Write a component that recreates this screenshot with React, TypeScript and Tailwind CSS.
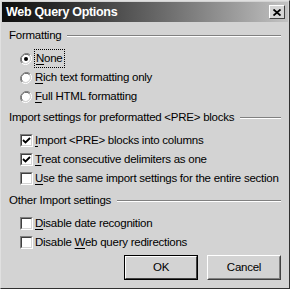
import React from "react";

const U = ({ c }: { c: string }) => <span className="underline underline-offset-[2px]">{c}</span>;

function Radio({ checked }: { checked?: boolean }) {
  return (
    <svg width="12" height="12" viewBox="0 0 12 12" className="shrink-0">
      <path d="M10.2 1.8 A6 6 0 0 0 1.8 10.2" stroke="#808080" strokeWidth="1" fill="none" />
      <path d="M9.5 2.5 A5 5 0 0 0 2.5 9.5" stroke="#404040" strokeWidth="1" fill="none" />
      <circle cx="6" cy="6" r="4.3" fill="#ffffff" />
      <path d="M1.8 10.2 A6 6 0 0 0 10.2 1.8" stroke="#ffffff" strokeWidth="1" fill="none" />
      <path d="M2.5 9.5 A5 5 0 0 0 9.5 2.5" stroke="#d4d4d4" strokeWidth="1" fill="none" />
      {checked && <circle cx="6" cy="6" r="2" fill="#000" />}
    </svg>
  );
}

function Check({ checked }: { checked?: boolean }) {
  return (
    <div className="w-[13px] h-[13px] shrink-0 border border-t-[#808080] border-l-[#808080] border-r-white border-b-white">
      <div className="w-full h-full border border-t-[#404040] border-l-[#404040] border-r-[#d4d4d4] border-b-[#d4d4d4] bg-white">
        {checked && (
          <svg width="9" height="9" viewBox="0 0 9 9" className="block">
            <path d="M1 4 L3.5 6.5 L8 2" stroke="#000" strokeWidth="1.8" fill="none" />
          </svg>
        )}
      </div>
    </div>
  );
}

function Header({ children }: { children: React.ReactNode }) {
  return (
    <div className="h-[18px] flex items-center gap-[6px]">
      <span className="whitespace-nowrap">{children}</span>
      <div className="flex-1 flex flex-col">
        <div className="h-px bg-[#808080]" />
        <div className="h-px bg-white" />
      </div>
    </div>
  );
}

function Row({ children }: { children: React.ReactNode }) {
  return <div className="h-[19px] flex items-center gap-[2px] pl-[11px] whitespace-nowrap">{children}</div>;
}

export default function App() {
  return (
    <div
      className="w-[290px] h-[289px] bg-[#d3d3d3] text-[11.5px] tracking-[-0.25px] text-black flex flex-col border-t border-l border-t-[#e0e0e0] border-l-[#e0e0e0] border-r border-b border-r-[#303030] border-b-[#303030]"
      style={{ fontFamily: '"Liberation Sans", Arial, sans-serif' }}
    >
      <div className="h-[20px] flex items-center justify-between pl-[4px] pr-[3px] bg-gradient-to-r from-[#0e0e0e] via-[#5f5f5f] to-[#c2c2c2] mt-[1px] mx-[1px]">
        <span className="text-white font-bold text-[12.5px] tracking-[-0.3px]">Web Query Options</span>
        <div className="w-[16px] h-[14px] bg-[#d4d4d4] border border-t-white border-l-white border-r-[#404040] border-b-[#404040] flex items-center justify-center">
          <svg width="8" height="7" viewBox="0 0 8 7">
            <path d="M0.5 0.5 L7.5 6.5 M7.5 0.5 L0.5 6.5" stroke="#000" strokeWidth="1.8" />
          </svg>
        </div>
      </div>
      <div className="flex flex-col px-[8px] pt-[5px]">
        <Header>Formatting</Header>
        <div className="h-[4px]" />
        <Row>
          <Radio checked />
          <span className="outline outline-1 outline-dotted outline-black px-[1px] ml-[1px]"><U c="N" />one</span>
        </Row>
        <Row>
          <Radio />
          <span className="ml-[1px]"><U c="R" />ich text formatting only</span>
        </Row>
        <Row>
          <Radio />
          <span className="ml-[1px]"><U c="F" />ull HTML formatting</span>
        </Row>
        <div className="h-[3px]" />
        <Header>Import settings for preformatted &lt;PRE&gt; blocks</Header>
        <div className="h-[4px]" />
        <Row>
          <Check checked />
          <span><U c="I" />mport &lt;PRE&gt; blocks into columns</span>
        </Row>
        <Row>
          <Check checked />
          <span><U c="T" />reat consecutive delimiters as one</span>
        </Row>
        <Row>
          <Check />
          <span><U c="U" />se the same import settings for the entire section</span>
        </Row>
        <div className="h-[4px]" />
        <Header>Other Import settings</Header>
        <div className="h-[4px]" />
        <Row>
          <Check />
          <span><U c="D" />isable date recognition</span>
        </Row>
        <Row>
          <Check />
          <span>Disable <U c="W" />eb query redirections</span>
        </Row>
        <div className="h-[3px]" />
        <div className="flex justify-end gap-[9px] pr-[0px]">
          <div className="w-[74px] h-[25px] border border-black">
            <div className="w-full h-full border border-t-white border-l-white border-r-[#404040] border-b-[#404040] flex items-center justify-center">
              OK
            </div>
          </div>
          <div className="w-[74px] h-[25px] border border-t-white border-l-white border-r-[#404040] border-b-[#404040]">
            <div className="w-full h-full border border-transparent border-r-[#808080] border-b-[#808080] flex items-center justify-center">
              Cancel
            </div>
          </div>
        </div>
      </div>
    </div>
  );
}
